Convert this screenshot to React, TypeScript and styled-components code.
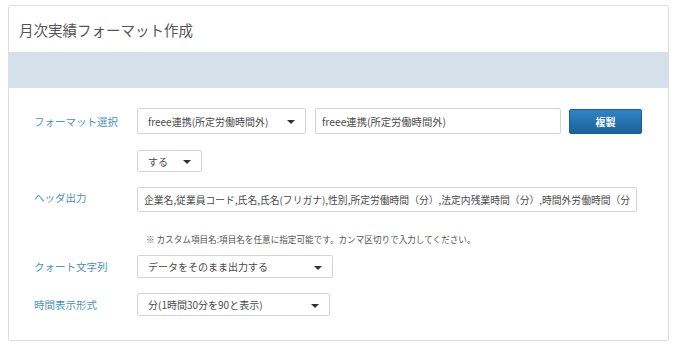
import React from "react";
import styled, { createGlobalStyle } from "styled-components";

const GlobalStyle = createGlobalStyle`
  html, body {
    margin: 0;
    padding: 0;
    background: #ffffff;
  }
  body {
    font-family: "Noto Sans CJK JP", "Noto Sans", sans-serif;
    color: #444;
  }
`;

const Card = styled.div`
  margin: 5px 0 0 8px;
  width: 661px;
  height: 336px;
  box-sizing: border-box;
  border: 1px solid #dcdfe2;
  border-radius: 2px;
  background: #fff;
  display: flex;
  flex-direction: column;
`;

const Header = styled.div`
  height: 46px;
  display: flex;
  align-items: center;
  padding-left: 10px;
  padding-top: 1px;
  box-sizing: border-box;
`;

const Title = styled.h1`
  margin: 0;
  font-size: 14.5px;
  font-weight: 400;
  color: #555;
`;

const Band = styled.div`
  height: 36px;
  background: #d5e1ea;
`;

const Form = styled.div`
  padding: 20px 0 0 25px;
  display: flex;
  flex-direction: column;
`;

const Row = styled.div<{ $mt?: number; $top?: boolean }>`
  display: flex;
  align-items: ${(p) => (p.$top ? "flex-start" : "center")};
  margin-top: ${(p) => p.$mt ?? 0}px;
`;

const Label = styled.div<{ $offset?: number }>`
  width: 103px;
  flex-shrink: 0;
  font-size: 10.5px;
  color: #4a93bd;
  margin-top: ${(p) => p.$offset ?? 0}px;
`;

const Controls = styled.div`
  display: flex;
  align-items: center;
`;

const Select = styled.div<{ $w: number; $h: number }>`
  width: ${(p) => p.$w}px;
  height: ${(p) => p.$h}px;
  box-sizing: border-box;
  border: 1px solid #d2d5d8;
  border-radius: 2px;
  background: #fff;
  display: flex;
  align-items: center;
  justify-content: space-between;
  padding: 0 10px;
  font-size: 10px;
  color: #4a4a4a;
  white-space: nowrap;
`;

const Caret = styled.span`
  width: 0;
  height: 0;
  border-left: 4px solid transparent;
  border-right: 4px solid transparent;
  border-top: 4px solid #333;
  margin-top: 2px;
`;

const TextInput = styled.input<{ $w: number; $h: number; $ml?: number; $fs?: number }>`
  width: ${(p) => p.$w}px;
  height: ${(p) => p.$h}px;
  margin: 0 0 0 ${(p) => p.$ml ?? 0}px;
  box-sizing: border-box;
  border: 1px solid #d2d5d8;
  border-radius: 2px;
  background: #fff;
  padding: 0 6px;
  font-family: inherit;
  font-size: ${(p) => p.$fs ?? 10.3}px;
  color: #4a4a4a;
  outline: none;
`;

const Button = styled.button`
  margin-left: 8px;
  width: 73px;
  height: 25px;
  border: 1px solid #1a5d93;
  border-radius: 2px;
  background: linear-gradient(to bottom, #2f84c6, #1c619c);
  color: #fff;
  font-family: inherit;
  font-size: 10px;
  font-weight: 700;
  cursor: pointer;
`;

const Note = styled.div`
  margin: 21px 0 0 112px;
  font-size: 8.6px;
  color: #555;
  line-height: 12px;
`;

export default function App() {
  return (
    <>
      <GlobalStyle />
      <Card>
        <Header>
          <Title>月次実績フォーマット作成</Title>
        </Header>
        <Band />
        <Form>
          <Row>
            <Label>フォーマット選択</Label>
            <Controls>
              <Select $w={169} $h={26}>
                <span>freee連携(所定労働時間外)</span>
                <Caret />
              </Select>
              <TextInput
                $w={246}
                $h={26}
                $ml={9}
                readOnly
                value="freee連携(所定労働時間外)"
              />
              <Button>複製</Button>
            </Controls>
          </Row>
          <Row $mt={16}>
            <Label />
            <Select $w={65} $h={22}>
              <span>する</span>
              <Caret />
            </Select>
          </Row>
          <Row $mt={15} $top>
            <Label $offset={3}>ヘッダ出力</Label>
            <TextInput
              $w={500}
              $h={25}
              $fs={9.8}
              readOnly
              value="企業名,従業員コード,氏名,氏名(フリガナ),性別,所定労働時間（分）,法定内残業時間（分）,時間外労働時間（分）"
            />
          </Row>
          <Note>
            ※ カスタム項目名:項目名を任意に指定可能です。カンマ区切りで入力してください。
          </Note>
          <Row $mt={10}>
            <Label>クォート文字列</Label>
            <Select $w={196} $h={23}>
              <span>データをそのまま出力する</span>
              <Caret />
            </Select>
          </Row>
          <Row $mt={15}>
            <Label>時間表示形式</Label>
            <Select $w={193} $h={23}>
              <span>分(1時間30分を90と表示)</span>
              <Caret />
            </Select>
          </Row>
        </Form>
      </Card>
    </>
  );
}
